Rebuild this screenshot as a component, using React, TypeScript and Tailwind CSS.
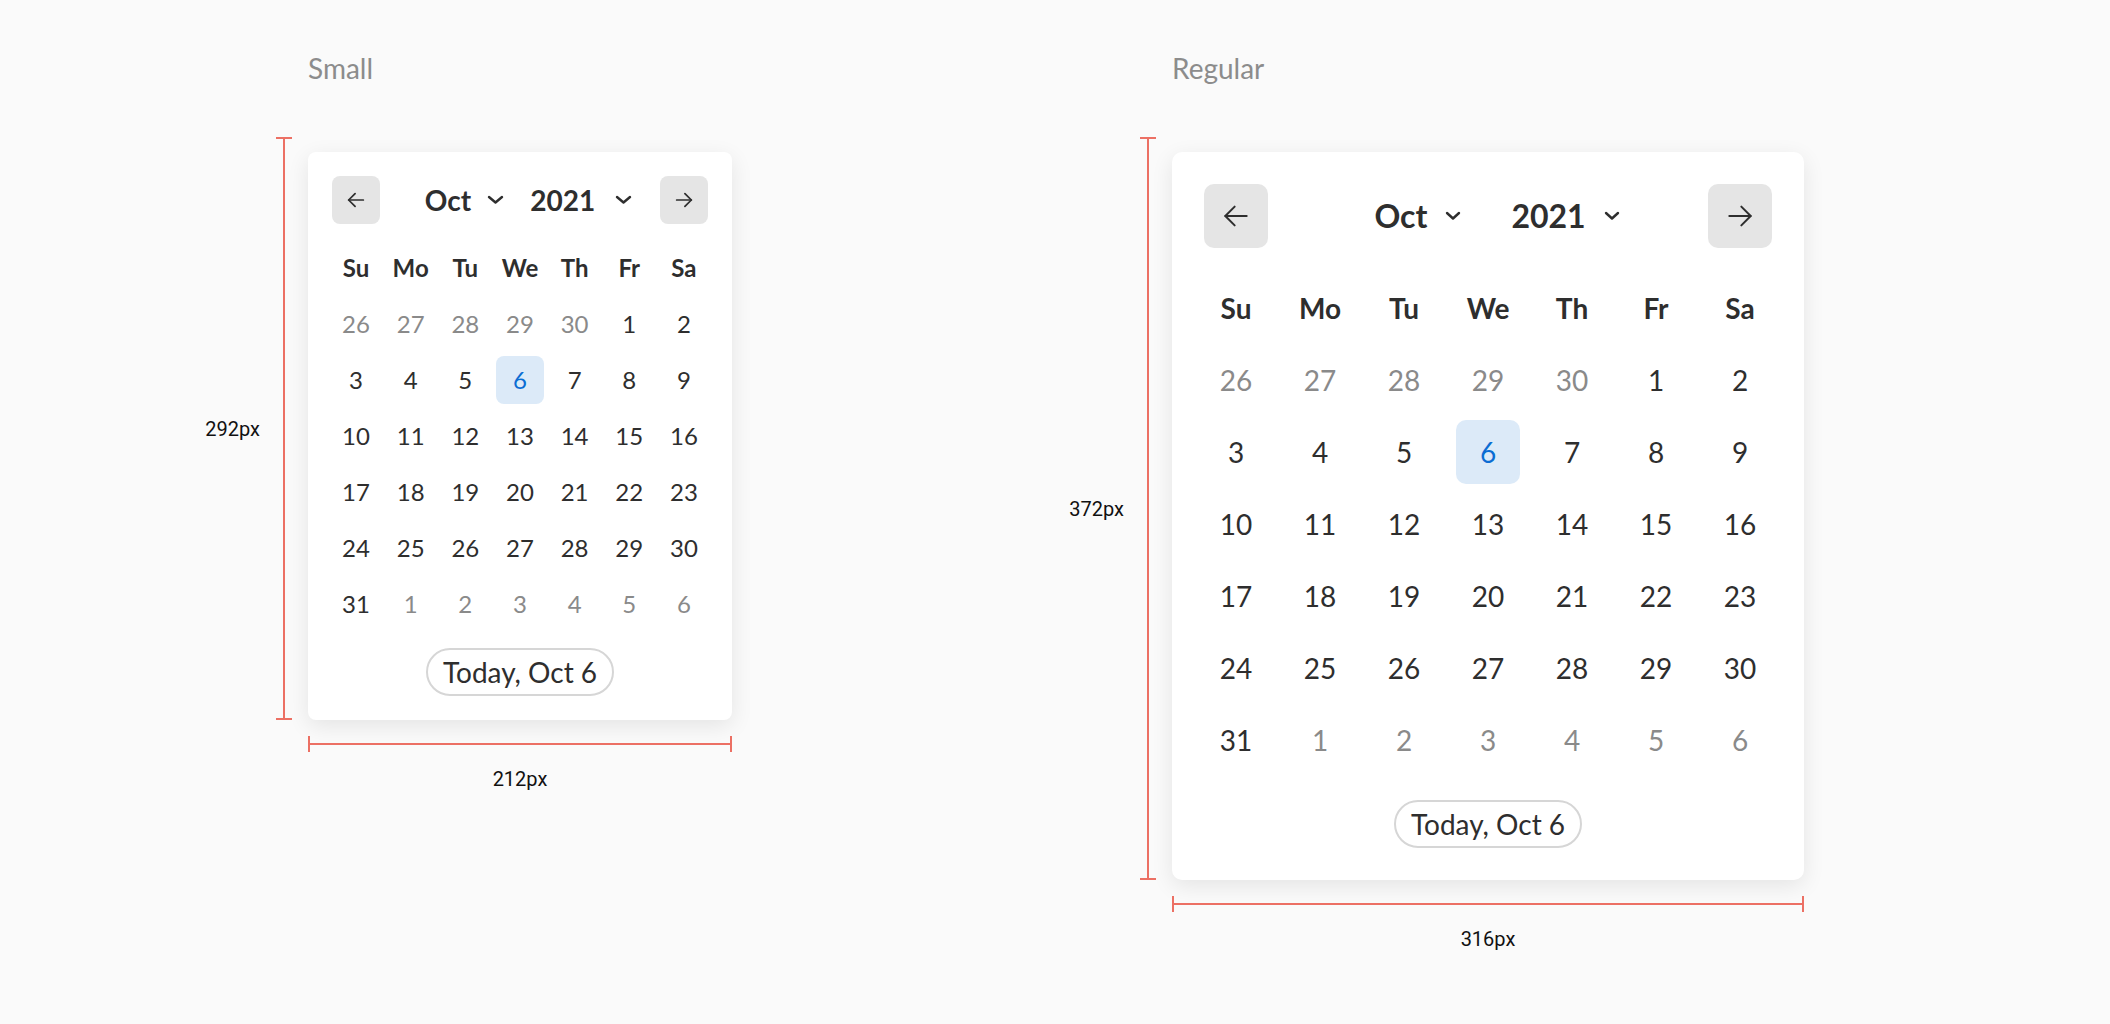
import React from "react";

type Cell = { d: number; out: boolean };

const rows: Cell[][] = [
  [26, 27, 28, 29, 30].map((d) => ({ d, out: true })).concat([1, 2].map((d) => ({ d, out: false }))),
  [3, 4, 5, 6, 7, 8, 9].map((d) => ({ d, out: false })),
  [10, 11, 12, 13, 14, 15, 16].map((d) => ({ d, out: false })),
  [17, 18, 19, 20, 21, 22, 23].map((d) => ({ d, out: false })),
  [24, 25, 26, 27, 28, 29, 30].map((d) => ({ d, out: false })),
  [{ d: 31, out: false }].concat([1, 2, 3, 4, 5, 6].map((d) => ({ d, out: true }))),
];

const weekdays = ["Su", "Mo", "Tu", "We", "Th", "Fr", "Sa"];

type Cfg = {
  card: string;
  navBtn: string;
  navRow: string;
  middle: string;
  title: string;
  chevGap: string;
  groupGap: string;
  yearChevGap: string;
  arrow: number;
  arrowSw: number;
  chevW: number;
  chevH: number;
  gridGap: string;
  cell: string;
  head: string;
  num: string;
  sel: string;
  today: string;
  label: string;
};

const small: Cfg = {
  card: "w-[424px] p-6 rounded-[8px]",
  navBtn: "w-12 h-12 rounded-[8px]",
  navRow: "h-12",
  middle: "pl-[17px]",
  title: "text-[28px]",
  chevGap: "ml-4",
  groupGap: "ml-[26px]",
  yearChevGap: "ml-5",
  arrow: 22,
  arrowSw: 1.9,
  chevW: 17,
  chevH: 10,
  gridGap: "mt-5 gap-y-2",
  cell: "w-12 h-12",
  head: "text-[24px]",
  num: "text-[24px]",
  sel: "rounded-[8px]",
  today: "mt-5",
  label: "292px",
};

const regular: Cfg = {
  card: "w-[632px] p-8 rounded-[10px]",
  navBtn: "w-16 h-16 rounded-[10px]",
  navRow: "h-16",
  middle: "pl-[18px]",
  title: "text-[32px]",
  chevGap: "ml-[18px]",
  groupGap: "ml-[50px]",
  yearChevGap: "ml-[18px]",
  arrow: 32,
  arrowSw: 1.5,
  chevW: 16,
  chevH: 10,
  gridGap: "mt-7 gap-y-2",
  cell: "w-16 h-16",
  head: "text-[28px]",
  num: "text-[28px]",
  sel: "rounded-[10px]",
  today: "mt-7",
  label: "372px",
};

function Arrow({ dir, size, sw }: { dir: "l" | "r"; size: number; sw: number }) {
  return (
    <svg width={size} height={size} viewBox="0 0 24 24" fill="none" stroke="#2e2e2e" strokeWidth={sw} strokeLinecap="round" strokeLinejoin="round">
      {dir === "l" ? (
        <>
          <path d="M20 12H4" />
          <path d="M11 5l-7 7 7 7" />
        </>
      ) : (
        <>
          <path d="M4 12h16" />
          <path d="M13 5l7 7-7 7" />
        </>
      )}
    </svg>
  );
}

function Chevron({ w, h }: { w: number; h: number }) {
  return (
    <svg width={w} height={h} viewBox={`0 0 ${w} ${h}`} fill="none" stroke="#2e2e2e" strokeWidth={2.4} strokeLinecap="round" strokeLinejoin="round">
      <path d={`M2 2 L${w / 2} ${h - 2.5} L${w - 2} 2`} />
    </svg>
  );
}

function Calendar({ c }: { c: Cfg }) {
  return (
    <div className={`${c.card} bg-white shadow-[0_6px_22px_rgba(0,0,0,0.09)] flex flex-col`}>
      <div className={`${c.navRow} flex items-center`}>
        <div className={`${c.navBtn} bg-[#e5e5e5] flex items-center justify-center shrink-0`}>
          <Arrow dir="l" size={c.arrow} sw={c.arrowSw} />
        </div>
        <div className={`flex-1 flex items-center justify-center ${c.middle}`}>
          <span className={`${c.title} font-bold text-[#2e2e2e] leading-none`}>Oct</span>
          <span className={`${c.chevGap} flex items-center`}>
            <Chevron w={c.chevW} h={c.chevH} />
          </span>
          <span className={`${c.groupGap} ${c.title} font-bold text-[#2e2e2e] leading-none`}>2021</span>
          <span className={`${c.yearChevGap} flex items-center`}>
            <Chevron w={c.chevW} h={c.chevH} />
          </span>
        </div>
        <div className={`${c.navBtn} bg-[#e5e5e5] flex items-center justify-center shrink-0`}>
          <Arrow dir="r" size={c.arrow} sw={c.arrowSw} />
        </div>
      </div>
      <div className={`${c.gridGap} flex flex-col`}>
        <div className="flex justify-between">
          {weekdays.map((w) => (
            <div key={w} className={`${c.cell} ${c.head} font-bold text-[#2e2e2e] flex items-center justify-center`}>
              {w}
            </div>
          ))}
        </div>
        {rows.map((r, i) => (
          <div key={i} className="flex justify-between">
            {r.map((cell, j) => {
              const selected = !cell.out && cell.d === 6;
              return (
                <div
                  key={j}
                  className={`${c.cell} ${c.num} flex items-center justify-center ${
                    selected ? `${c.sel} bg-[#dceaf8] text-[#0b6dd3]` : cell.out ? "text-[#8a8a8a]" : "text-[#2e2e2e]"
                  }`}
                >
                  {cell.d}
                </div>
              );
            })}
          </div>
        ))}
      </div>
      <div className={`${c.today} flex justify-center`}>
        <div className="w-[188px] h-12 rounded-full border-2 border-[#d6d6d6] flex items-center justify-center text-[28px] text-[#2e2e2e]">
          Today, Oct 6
        </div>
      </div>
    </div>
  );
}

function Section({ c, title, width, className }: { c: Cfg; title: string; width: string; className: string }) {
  return (
    <div className={`flex flex-col ${className}`}>
      <div className="pl-[108px] h-10 leading-[40px] text-[28px] text-[#8c8c8c]">{title}</div>
      <div className="mt-[49px] flex items-stretch">
        <div className="w-[60px] flex items-center justify-end font-['Roboto',sans-serif] text-[20px] leading-6 text-[#111]">
          {c.label}
        </div>
        <div className="ml-4 w-4 flex flex-col items-center">
          <div className="w-4 h-[2px] bg-[#ec7064]" />
          <div className="w-[2px] flex-1 bg-[#ec7064]" />
          <div className="w-4 h-[2px] bg-[#ec7064]" />
        </div>
        <div className="ml-4 pt-[15px]">
          <Calendar c={c} />
        </div>
      </div>
      <div className={`ml-[108px] ${width} flex flex-col`}>
        <div className="mt-4 h-4 flex items-center">
          <div className="w-[2px] h-4 bg-[#ec7064]" />
          <div className="flex-1 h-[2px] bg-[#ec7064]" />
          <div className="w-[2px] h-4 bg-[#ec7064]" />
        </div>
        <div className="mt-[15px] text-center font-['Roboto',sans-serif] text-[20px] leading-6 text-[#111]">
          {width === "w-[424px]" ? "212px" : "316px"}
        </div>
      </div>
    </div>
  );
}

export default function App() {
  return (
    <div className="w-[2110px] h-[1024px] bg-[#fafafa] font-['Lato',sans-serif] flex items-start pt-12 overflow-hidden">
      <Section c={small} title="Small" width="w-[424px]" className="ml-[200px]" />
      <Section c={regular} title="Regular" width="w-[632px]" className="ml-[332px]" />
    </div>
  );
}
